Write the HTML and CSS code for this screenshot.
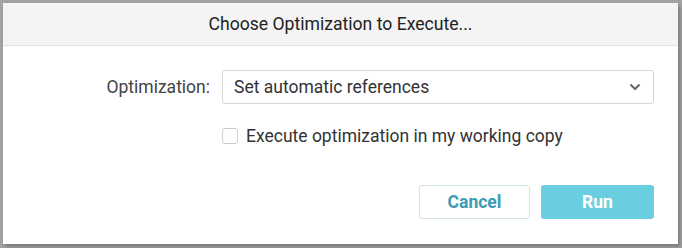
FILE: index.html
```html
<!DOCTYPE html>
<html lang="en">
<head>
    <meta charset="UTF-8">
    <title>Choose Optimization</title>
    <link rel="stylesheet" href="styles.css">
</head>
<body>
    <div class="dialog">
        <div class="dialog-header">Choose Optimization to Execute...</div>
        <div class="dialog-body">
            <div class="form-row">
                <label class="form-label" for="optimization">Optimization:</label>
                <div class="select-box" id="optimization">
                    <span>Set automatic references</span>
                    <svg class="chevron" width="12" height="8" viewBox="0 0 12 8">
                        <path d="M1.5 1.5 L6 6 L10.5 1.5" fill="none" stroke="#666" stroke-width="2"/>
                    </svg>
                </div>
            </div>
            <div class="form-row">
                <span></span>
                <label class="check-row">
                    <span class="checkbox"></span>
                    Execute optimization in my working copy
                </label>
            </div>
        </div>
        <div class="dialog-footer">
            <button class="btn btn-cancel">Cancel</button>
            <button class="btn btn-run">Run</button>
        </div>
    </div>
</body>
</html>
```

FILE: styles.css
```css
body {
    margin: 0;
    padding: 3px;
    background-color: #a3a3a3;
    font-family: Roboto, "Liberation Sans", sans-serif;
    height: 248px;
    box-sizing: border-box;
    overflow: hidden;
}
.dialog {
    width: 675px;
    height: 241px;
    background: white;
    box-shadow: 2px 3px 4px rgba(0,0,0,0.25);
    display: flex;
    flex-direction: column;
}
.dialog-header {
    height: 42px;
    line-height: 42px;
    background: #f4f4f4;
    border-bottom: 1px solid #e2e2e2;
    text-align: center;
    font-size: 17.6px;
    color: #222;
}
.dialog-body {
    padding: 24px 24px 0 12px;
    display: flex;
    flex-direction: column;
    gap: 22px;
}
.form-row {
    display: grid;
    grid-template-columns: 195px 1fr;
    column-gap: 12px;
    align-items: center;
}
.form-label {
    text-align: right;
    font-size: 17.5px;
    color: #444;
}
.select-box {
    height: 34px;
    box-sizing: border-box;
    border: 1px solid #d6d6d6;
    border-radius: 3px;
    padding: 0 12px 0 11px;
    display: flex;
    align-items: center;
    justify-content: space-between;
    font-size: 17.5px;
    color: #333;
}
.check-row {
    display: flex;
    align-items: center;
    gap: 8px;
    font-size: 17.5px;
    color: #333;
}
.checkbox {
    width: 14px;
    height: 14px;
    border: 1px solid #ccc;
    border-radius: 3px;
}
.dialog-footer {
    margin-top: auto;
    padding: 0 24px 25px 0;
    display: flex;
    justify-content: flex-end;
    gap: 11px;
}
.btn {
    height: 34px;
    border-radius: 3px;
    font-family: Roboto, "Liberation Sans", sans-serif;
    font-size: 17.5px;
    font-weight: bold;
    cursor: pointer;
}
.btn-cancel {
    width: 111px;
    background: white;
    border: 1px solid #d2e4ea;
    color: #3d9ab5;
}
.btn-run {
    width: 113px;
    background: #69cfe0;
    border: none;
    color: white;
}
```
